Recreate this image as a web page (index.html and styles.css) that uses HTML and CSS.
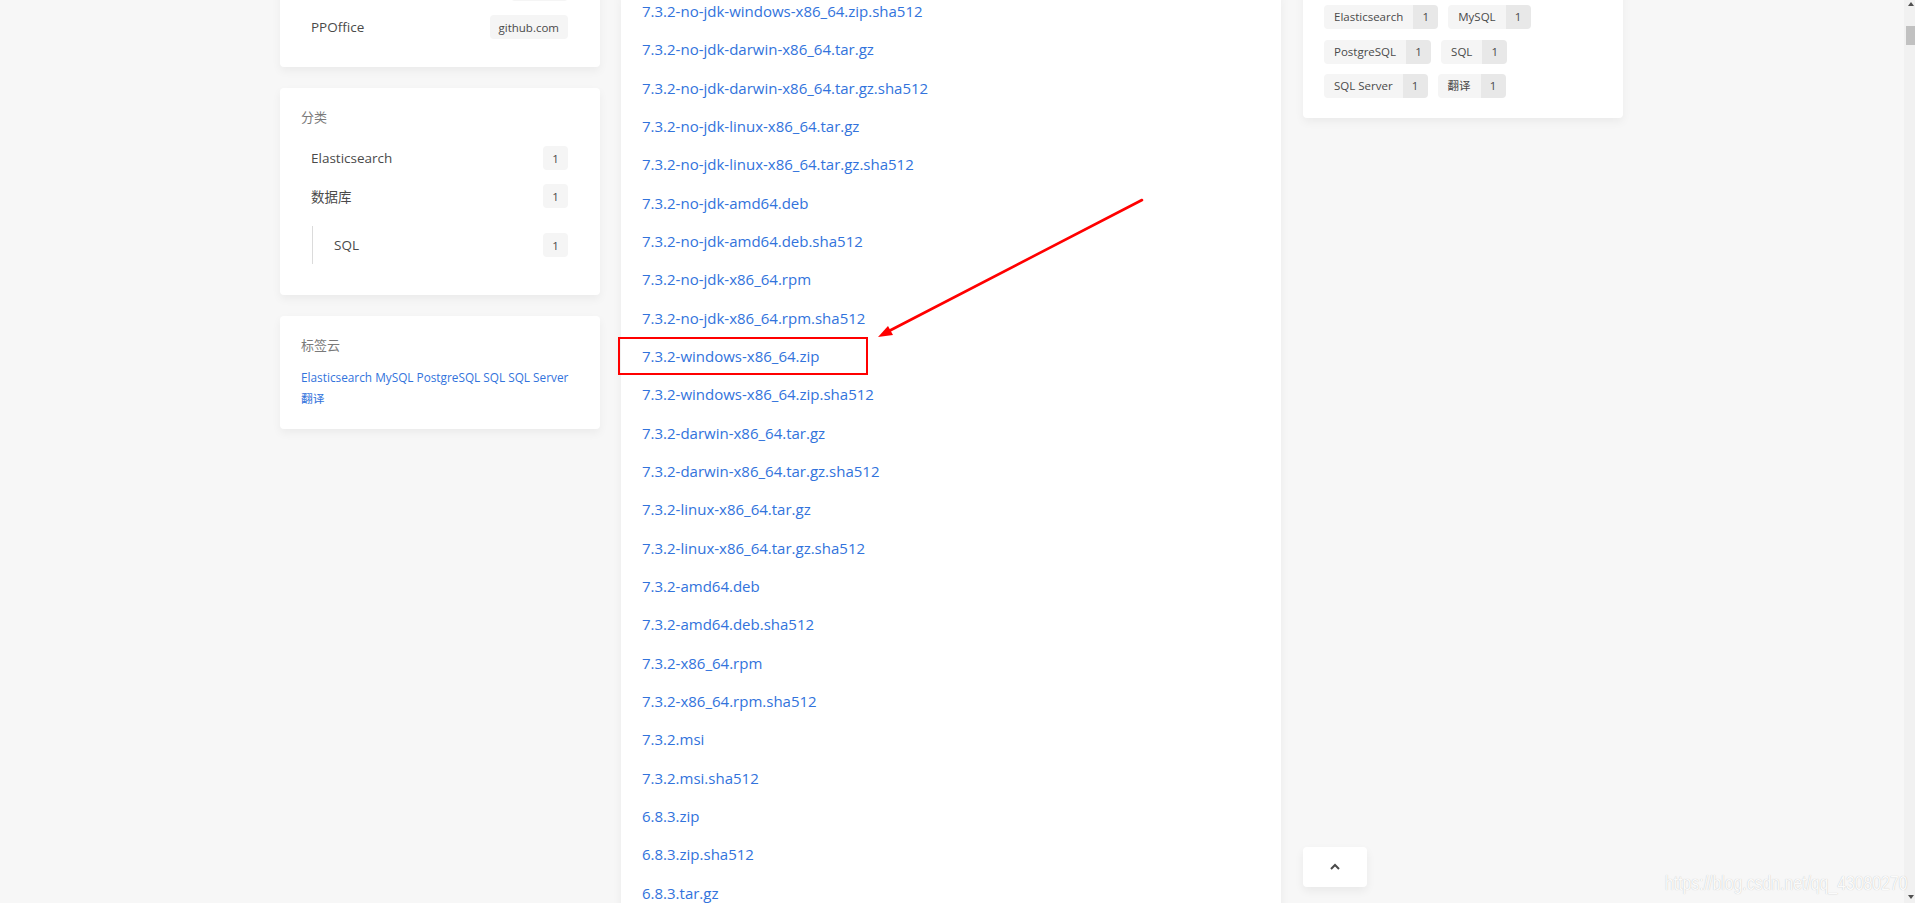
FILE: index.html
```html
<!DOCTYPE html>
<html lang="zh-CN">
<head>
<meta charset="utf-8">
<title>Elasticsearch 下载</title>
<link rel="stylesheet" href="styles.css">
</head>
<body>
<div class="page">
  <div class="columns">
    <aside class="col-left">
      <div class="card">
        <h3 class="card-title">链接</h3>
        <ul class="menu">
          <li class="menu-item"><span>Hexo</span><span class="badge">hexo.io</span></li>
          <li class="menu-item"><span>PPOffice</span><span class="badge">github.com</span></li>
        </ul>
      </div>
      <div class="card">
        <h3 class="card-title">分类</h3>
        <ul class="menu">
          <li class="menu-item"><span>Elasticsearch</span><span class="badge">1</span></li>
          <li>
            <div class="menu-item"><span>数据库</span><span class="badge">1</span></div>
            <ul class="submenu">
              <li class="menu-item sub"><span>SQL</span><span class="badge">1</span></li>
            </ul>
          </li>
        </ul>
      </div>
      <div class="card">
        <h3 class="card-title">标签云</h3>
        <p class="cloud"><a>Elasticsearch</a> <a>MySQL</a> <a>PostgreSQL</a> <a>SQL</a> <a>SQL Server</a> <a>翻译</a></p>
      </div>
    </aside>

    <main class="col-main">
      <div class="card main-card">
        <ul class="files">
          <li><a>7.3.2-no-jdk-windows-x86_64.zip.sha512</a></li>
          <li><a>7.3.2-no-jdk-darwin-x86_64.tar.gz</a></li>
          <li><a>7.3.2-no-jdk-darwin-x86_64.tar.gz.sha512</a></li>
          <li><a>7.3.2-no-jdk-linux-x86_64.tar.gz</a></li>
          <li><a>7.3.2-no-jdk-linux-x86_64.tar.gz.sha512</a></li>
          <li><a>7.3.2-no-jdk-amd64.deb</a></li>
          <li><a>7.3.2-no-jdk-amd64.deb.sha512</a></li>
          <li><a>7.3.2-no-jdk-x86_64.rpm</a></li>
          <li><a>7.3.2-no-jdk-x86_64.rpm.sha512</a></li>
          <li><a>7.3.2-windows-x86_64.zip</a></li>
          <li><a>7.3.2-windows-x86_64.zip.sha512</a></li>
          <li><a>7.3.2-darwin-x86_64.tar.gz</a></li>
          <li><a>7.3.2-darwin-x86_64.tar.gz.sha512</a></li>
          <li><a>7.3.2-linux-x86_64.tar.gz</a></li>
          <li><a>7.3.2-linux-x86_64.tar.gz.sha512</a></li>
          <li><a>7.3.2-amd64.deb</a></li>
          <li><a>7.3.2-amd64.deb.sha512</a></li>
          <li><a>7.3.2-x86_64.rpm</a></li>
          <li><a>7.3.2-x86_64.rpm.sha512</a></li>
          <li><a>7.3.2.msi</a></li>
          <li><a>7.3.2.msi.sha512</a></li>
          <li><a>6.8.3.zip</a></li>
          <li><a>6.8.3.zip.sha512</a></li>
          <li><a>6.8.3.tar.gz</a></li>
        </ul>
      </div>
    </main>

    <aside class="col-right">
      <div class="card">
        <h3 class="card-title">标签</h3>
        <div class="tags">
          <span class="tag"><span class="tag-name">Elasticsearch</span><span class="tag-count">1</span></span>
          <span class="tag"><span class="tag-name">MySQL</span><span class="tag-count">1</span></span>
          <span class="tag"><span class="tag-name">PostgreSQL</span><span class="tag-count">1</span></span>
          <span class="tag"><span class="tag-name">SQL</span><span class="tag-count">1</span></span>
          <span class="tag"><span class="tag-name">SQL Server</span><span class="tag-count">1</span></span>
          <span class="tag"><span class="tag-name">翻译</span><span class="tag-count">1</span></span>
        </div>
      </div>
    </aside>
  </div>

  <div class="scrollbar">
    <span class="sb-up"></span>
    <span class="sb-thumb"></span>
    <span class="sb-fill"></span>
    <span class="sb-down"></span>
  </div>

  <a class="back-to-top" title="回到顶端">
    <svg width="12" height="8" viewBox="0 0 12 8"><path d="M2 6 L6 2 L10 6" fill="none" stroke="#4a4a4a" stroke-width="2"/></svg>
  </a>

  <div class="watermark">https://blog.csdn.net/qq_43080270</div>

  <svg class="annotation" width="1915" height="903" viewBox="0 0 1915 903">
    <rect x="619" y="338" width="248" height="36" fill="none" stroke="#ff0000" stroke-width="2"/>
    <line x1="1142" y1="200" x2="889" y2="331" stroke="#ff0000" stroke-width="2.6" stroke-linecap="round"/>
    <polygon points="878,337 893,335 888,326" fill="#ff0000"/>
  </svg>
</div>
</body>
</html>
```

FILE: styles.css
```css
* { box-sizing: border-box; }
html, body { margin: 0; padding: 0; }
body {
  background: #f7f7f7;
  font-family: "Open Sans", "Noto Sans", "Noto Sans CJK SC", sans-serif;
  color: #4a4a4a;
  width: 1915px;
  height: 903px;
  overflow: hidden;
}
ul { list-style: none; margin: 0; padding: 0; }
h3 { margin: 0; }
a { text-decoration: none; }

.page {
  position: relative;
  display: flex;
  width: 1915px;
  height: 903px;
  overflow: hidden;
}
.columns {
  flex: 1;
  display: flex;
  align-items: flex-start;
  padding-left: 280px;
}
.col-left { width: 320px; margin-top: -81px; display: flex; flex-direction: column; gap: 21px; }
.col-main { width: 660px; margin-left: 21px; margin-top: -8.2px; }
.col-right { width: 320px; margin-left: 22px; margin-top: -46px; }

.card {
  background: #fff;
  border-radius: 4px;
  box-shadow: 0 4px 10px rgba(0,0,0,0.05);
  padding: 20px 21px;
}
.col-left .card:first-child { padding-bottom: 21px; }
.card-title {
  font-size: 13px;
  font-weight: normal;
  color: #7a7a7a;
  line-height: 18px;
  height: 18px;
  margin-bottom: 13px;
}

.menu-item {
  display: flex;
  align-items: center;
  justify-content: space-between;
  height: 38px;
  padding: 0 11px 0 10px;
  font-size: 13.5px;
  color: #4a4a4a;
}
.badge {
  display: inline-flex;
  align-items: center;
  justify-content: center;
  height: 24px;
  min-width: 25px;
  padding: 0 9px;
  background: #f5f5f5;
  border-radius: 4px;
  font-size: 11.5px;
  color: #4a4a4a;
}
.submenu {
  margin: 11px 11px 11px 10.5px;
  border-left: 1px solid #dbdbdb;
  padding-left: 10.5px;
}
.submenu .menu-item.sub { padding-left: 11px; padding-right: 0; }

.cloud {
  margin: 0;
  font-size: 11.8px;
  line-height: 21px;
}
.cloud a { color: #3273dc; white-space: nowrap; }

.main-card {
  padding: 0 21px 40px;
  border-radius: 0;
  min-height: 1000px;
}
.files li {
  height: 38.35px;
  line-height: 38.35px;
  font-size: 15px;
}
.files a { color: #3273dc; }

.tags {
  display: flex;
  flex-wrap: wrap;
  gap: 10.5px 10px;
}
.tag {
  display: inline-flex;
  height: 24px;
  border-radius: 4px;
  overflow: hidden;
  font-size: 11.5px;
  line-height: 24px;
  color: #4a4a4a;
}
.tag-name { background: #f5f5f5; padding: 0 10px; }
.tag-count { background: #e8e8e8; width: 25px; text-align: center; }

.scrollbar {
  width: 11px;
  height: 903px;
  background: #f1f1f1;
  display: flex;
  flex-direction: column;
  align-items: flex-end;
}
.sb-up {
  margin-top: 2px;
  margin-right: 1px;
  width: 0; height: 0;
  border-left: 3.5px solid transparent;
  border-right: 3.5px solid transparent;
  border-bottom: 4px solid #505050;
}
.sb-thumb {
  margin-top: 20px;
  width: 9px;
  height: 19px;
  background: #c1c1c1;
}
.sb-fill { flex: 1; }
.sb-down {
  margin-bottom: 4px;
  margin-right: 1px;
  width: 0; height: 0;
  border-left: 3.5px solid transparent;
  border-right: 3.5px solid transparent;
  border-top: 4px solid #505050;
}

.back-to-top {
  position: absolute;
  left: 1303px;
  top: 847px;
  width: 64px;
  height: 40px;
  background: #fff;
  border-radius: 4px;
  box-shadow: 0 4px 10px rgba(0,0,0,0.06);
  display: flex;
  align-items: center;
  justify-content: center;
}

.watermark {
  position: absolute;
  left: 1665px;
  top: 871px;
  font-family: "Liberation Sans", Arial, sans-serif;
  font-size: 20px;
  line-height: 24px;
  color: rgba(255,255,255,0.95);
  text-shadow: 0 0 1px rgba(0,0,0,0.25);
  transform: scaleX(0.79);
  transform-origin: left center;
  white-space: nowrap;
}

.annotation {
  position: absolute;
  left: 0;
  top: 0;
  pointer-events: none;
}
```
